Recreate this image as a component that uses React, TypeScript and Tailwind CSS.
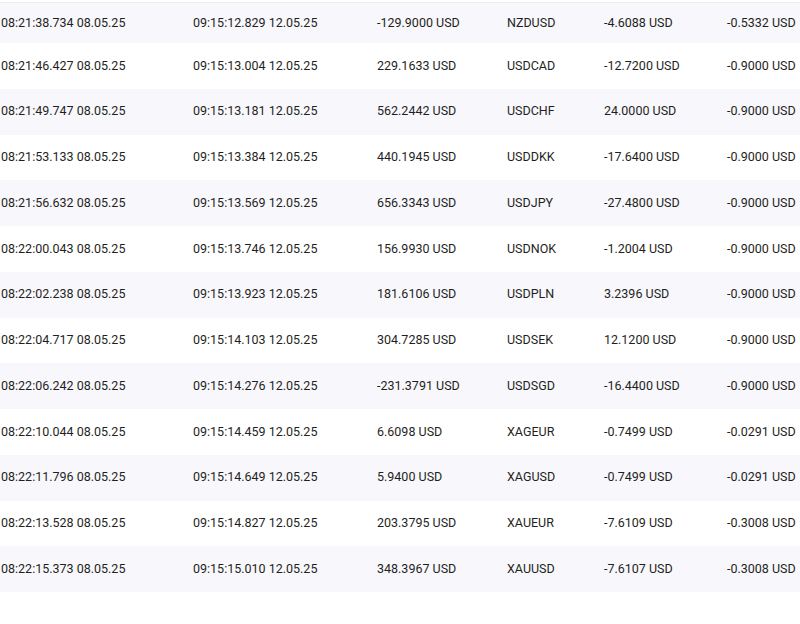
const rows = [
  ["08:21:38.734 08.05.25", "09:15:12.829 12.05.25", "-129.9000 USD", "NZDUSD", "-4.6088 USD", "-0.5332 USD"],
  ["08:21:46.427 08.05.25", "09:15:13.004 12.05.25", "229.1633 USD", "USDCAD", "-12.7200 USD", "-0.9000 USD"],
  ["08:21:49.747 08.05.25", "09:15:13.181 12.05.25", "562.2442 USD", "USDCHF", "24.0000 USD", "-0.9000 USD"],
  ["08:21:53.133 08.05.25", "09:15:13.384 12.05.25", "440.1945 USD", "USDDKK", "-17.6400 USD", "-0.9000 USD"],
  ["08:21:56.632 08.05.25", "09:15:13.569 12.05.25", "656.3343 USD", "USDJPY", "-27.4800 USD", "-0.9000 USD"],
  ["08:22:00.043 08.05.25", "09:15:13.746 12.05.25", "156.9930 USD", "USDNOK", "-1.2004 USD", "-0.9000 USD"],
  ["08:22:02.238 08.05.25", "09:15:13.923 12.05.25", "181.6106 USD", "USDPLN", "3.2396 USD", "-0.9000 USD"],
  ["08:22:04.717 08.05.25", "09:15:14.103 12.05.25", "304.7285 USD", "USDSEK", "12.1200 USD", "-0.9000 USD"],
  ["08:22:06.242 08.05.25", "09:15:14.276 12.05.25", "-231.3791 USD", "USDSGD", "-16.4400 USD", "-0.9000 USD"],
  ["08:22:10.044 08.05.25", "09:15:14.459 12.05.25", "6.6098 USD", "XAGEUR", "-0.7499 USD", "-0.0291 USD"],
  ["08:22:11.796 08.05.25", "09:15:14.649 12.05.25", "5.9400 USD", "XAGUSD", "-0.7499 USD", "-0.0291 USD"],
  ["08:22:13.528 08.05.25", "09:15:14.827 12.05.25", "203.3795 USD", "XAUEUR", "-7.6109 USD", "-0.3008 USD"],
  ["08:22:15.373 08.05.25", "09:15:15.010 12.05.25", "348.3967 USD", "XAUUSD", "-7.6107 USD", "-0.3008 USD"],
];

export default function App() {
  return (
    <div className="w-[800px] h-[624px] overflow-hidden bg-white pt-[2px] text-[12.5px] text-[#1f1f23] font-['Roboto',sans-serif]">
      <div className="border-t border-[#f1ecea]">
        {rows.map((r, i) => (
          <div
            key={i}
            className={`flex items-center whitespace-nowrap ${i === 0 ? "h-[40px]" : "h-[45.75px]"} ${i % 2 === 0 ? "bg-[#f8f8fc]" : "bg-white"}`}
          >
            <div className="w-[193px] shrink-0 pl-px">{r[0]}</div>
            <div className="w-[184px] shrink-0">{r[1]}</div>
            <div className="w-[130px] shrink-0">{r[2]}</div>
            <div className="w-[97px] shrink-0">{r[3]}</div>
            <div className="w-[123px] shrink-0">{r[4]}</div>
            <div className="shrink-0">{r[5]}</div>
          </div>
        ))}
      </div>
    </div>
  );
}
